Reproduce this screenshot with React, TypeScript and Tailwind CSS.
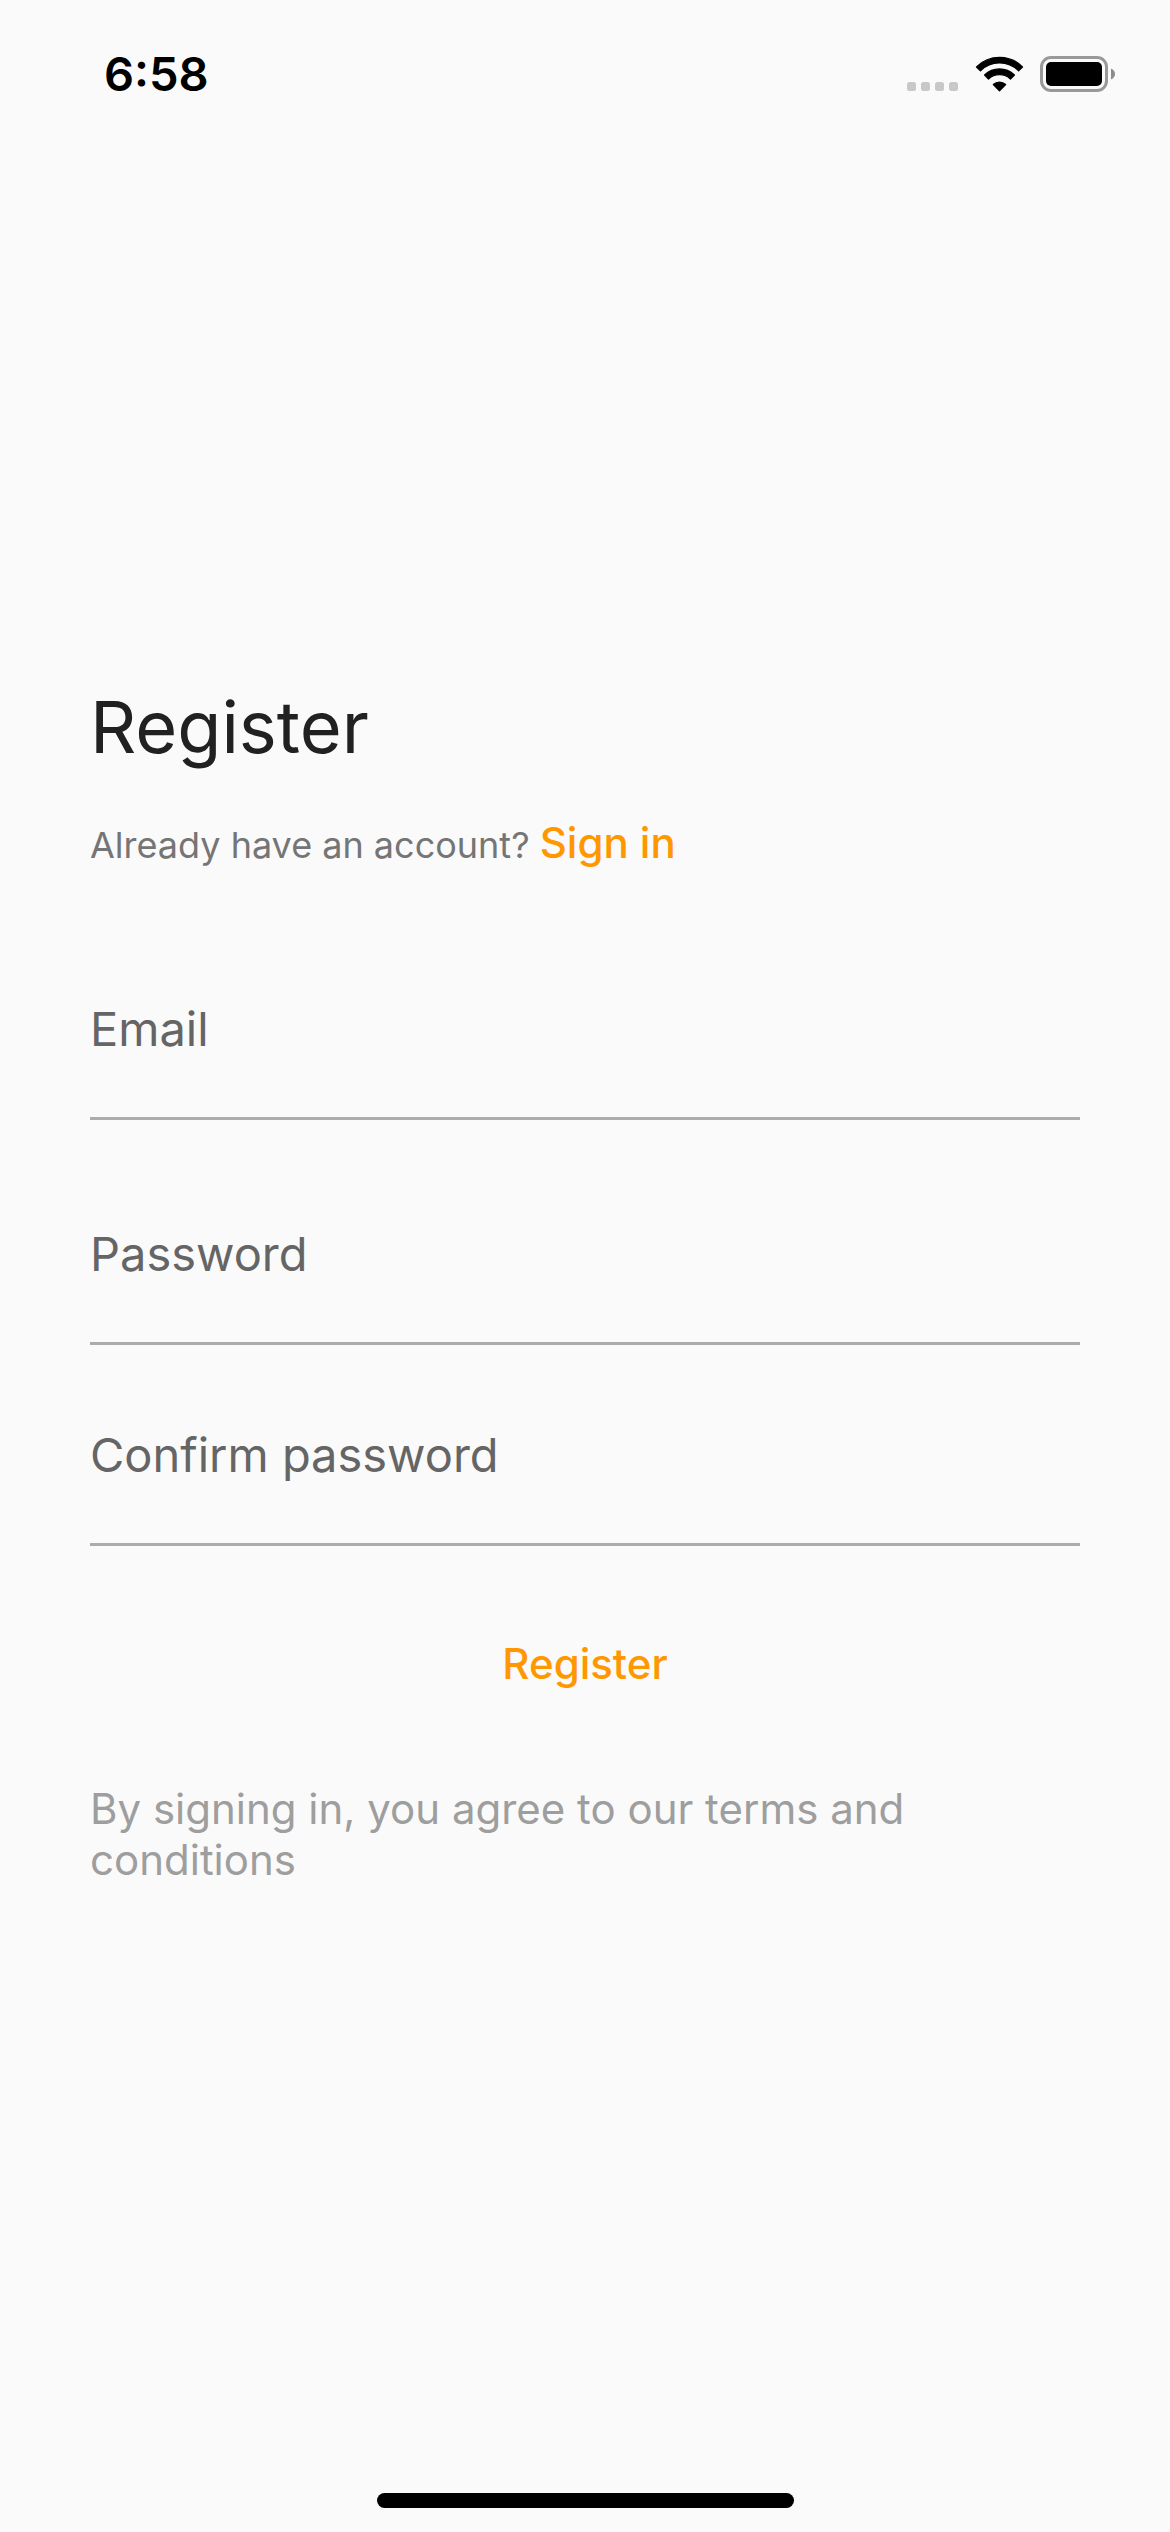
import React from "react";

function StatusBar() {
  return (
    <header className="flex h-[148px] items-center justify-between pl-[104px] pr-[55px]">
      <time className="text-[47px] leading-[56px] font-semibold text-black">6:58</time>
      <div className="flex items-center gap-4">
        <svg className="h-9 w-[52px]" viewBox="0 0 52 36" fill="#c8c8c8" aria-hidden="true">
          <rect x="0" y="26" width="9" height="9" rx="2.5" />
          <rect x="14" y="26" width="9" height="9" rx="2.5" />
          <rect x="28" y="26" width="9" height="9" rx="2.5" />
          <rect x="42" y="26" width="9" height="9" rx="2.5" />
        </svg>
        <svg className="h-9 w-[49px]" viewBox="0 0 49 37" stroke="#000" strokeWidth="1.4" strokeLinejoin="round" aria-hidden="true">
          <path d="M0.9 11.2A33.5 33.5 0 0 1 48.1 11.2L44.1 15.1A27.7 27.7 0 0 0 4.9 15.1Z" />
          <path d="M9.2 19.6A22 22 0 0 1 39.8 19.6L35.8 23.6A16.4 16.4 0 0 0 13.2 23.6Z" />
          <path d="M18.2 29.4A9.2 9.2 0 0 1 30.8 29.4L24.5 35.7Z" />
        </svg>
        <svg className="h-9 w-[75px]" viewBox="0 0 75 36" aria-hidden="true">
          <rect x="1.5" y="1.5" width="65" height="33" rx="9.5" fill="none" stroke="#999" strokeWidth="3" />
          <rect x="6" y="6" width="56" height="24" rx="5" />
          <path d="M71 12.5C73.5 13.5 75 15.6 75 18S73.5 22.5 71 23.5Z" fill="#8c8c8c" />
        </svg>
      </div>
    </header>
  );
}

function Field({ id, label, type }: { id: string; label: string; type: string }) {
  return (
    <div className="relative h-[146px] border-b-[3px] border-[#acacac]">
      <label htmlFor={id} className="pointer-events-none absolute left-0 top-[26px] text-[47px] leading-[58px] text-[#656565]">
        {label}
      </label>
      <input id={id} type={type} className="h-full w-full bg-transparent text-[47px] outline-none" />
    </div>
  );
}

export default function App() {
  return (
    <div className="flex min-h-screen flex-col bg-[#fafafa] font-['Inter',sans-serif]">
      <StatusBar />
      <main className="flex flex-1 flex-col px-[90px] pt-[535px]">
        <h1 className="text-[72px] leading-[88px] text-[#212121]">Register</h1>
        <p className="mt-[47px] text-[36px] leading-[50px] text-[#757575]">
          Already have an account?{" "}
          <a href="#signin" className="text-[42px] font-medium text-[#ff9800]">
            Sign in
          </a>
        </p>
        <form className="mt-[104px] flex flex-col">
          <Field id="email" label="Email" type="email" />
          <div className="mt-[79px]">
            <Field id="password" label="Password" type="password" />
          </div>
          <div className="mt-[55px]">
            <Field id="confirm" label="Confirm password" type="password" />
          </div>
          <button type="button" className="mt-[93px] self-center text-[42px] leading-[50px] font-medium text-[#ff9800]">
            Register
          </button>
        </form>
        <p className="mt-[94px] text-[42px] leading-[51px] text-[#9e9e9e]">
          By signing in, you agree to our terms and conditions
        </p>
      </main>
      <div className="mx-auto mb-6 h-[15px] w-[417px] rounded-full bg-black" />
    </div>
  );
}
